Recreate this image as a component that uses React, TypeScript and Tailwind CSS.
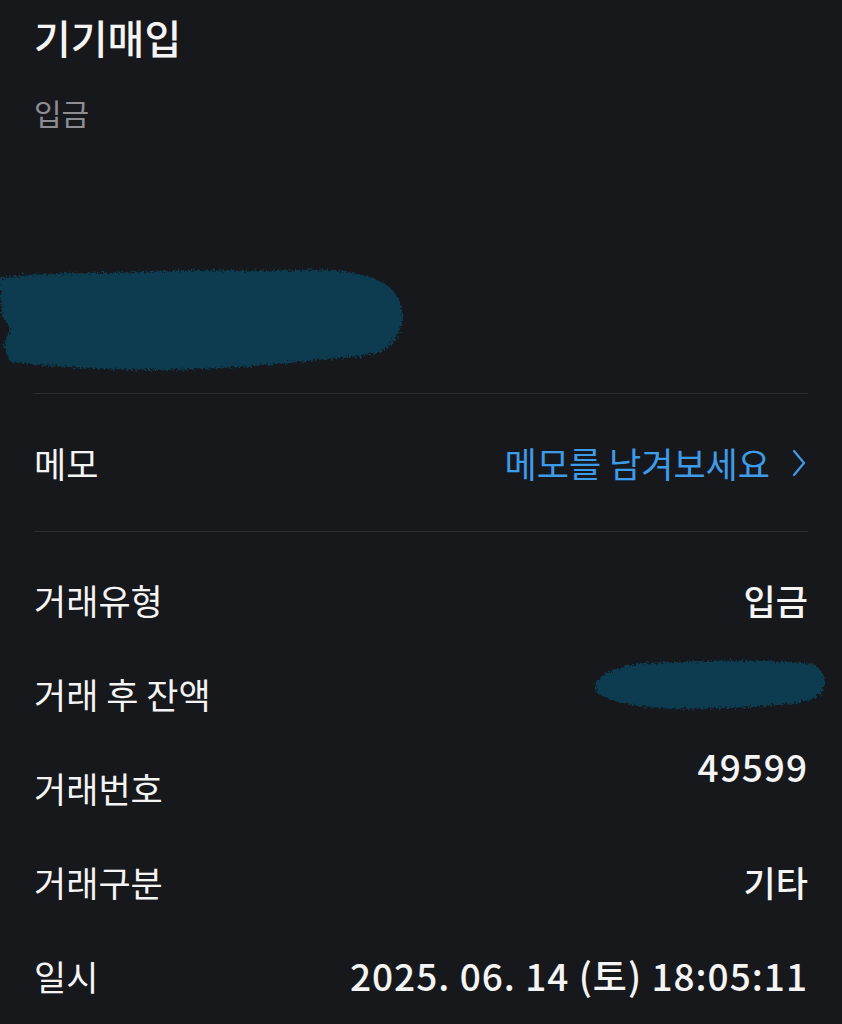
import React from 'react';

const font = { fontFamily: '"Noto Sans CJK KR", "Noto Sans", sans-serif' };

// 가려진 영역 (브러시로 칠한 모양)
const BrushBlob = ({ width, height, d, id }: { width: number; height: number; d: string; id: string }) => (
  <svg width={width} height={height} viewBox={`0 0 ${width} ${height}`} className="block">
    <defs>
      <filter id={id} x="-5%" y="-10%" width="110%" height="120%">
        <feTurbulence type="fractalNoise" baseFrequency="0.45" numOctaves="3" result="n" />
        <feDisplacementMap in="SourceGraphic" in2="n" scale="8" />
      </filter>
    </defs>
    <path d={d} fill="#0b3a4f" filter={`url(#${id})`} />
  </svg>
);

const rows = [
  { label: '거래유형', value: '입금' },
  { label: '거래 후 잔액', value: null },
  { label: '거래번호', value: '49599', num: true, raised: true },
  { label: '거래구분', value: '기타' },
  { label: '일시', value: '2025. 06. 14 (토) 18:05:11', num: true },
];

export default function App() {
  return (
    <div className="min-h-screen w-full bg-[#17181c] text-[#f4f4f5] overflow-hidden" style={font}>
      <div className="px-[34px] pt-[13px]">
        <h1 className="text-[40px] leading-[48px] font-medium">기기매입</h1>
        <p className="mt-[33px] text-[30px] leading-[36px] text-[#8d8d92]">입금</p>
      </div>

      <div className="h-[263px] pt-[136px]">
        <BrushBlob
          id="blob1"
          width={410}
          height={110}
          d="M0 12 C40 6 90 8 140 6 C200 3 260 6 300 4 C340 3 370 8 385 18 C398 26 404 40 402 56 C400 70 392 80 380 86 C360 92 330 92 300 96 C250 101 200 104 150 104 C100 104 50 100 10 96 L4 80 L10 62 L2 50 Z"
        />
      </div>

      <div className="px-[34px]">
        <div className="h-px bg-[#2d2e33]" />
        <div className="h-[137px] flex items-center justify-between">
          <span className="text-[35px] leading-none">메모</span>
          <span className="flex items-center gap-[22px] text-[35px] leading-none text-[#3d9be9]">
            메모를 남겨보세요
            <svg width="14" height="28" viewBox="0 0 14 28" fill="none" className="mr-[2px]">
              <path d="M2 2 L12 14 L2 26" stroke="#3d9be9" strokeWidth="2.2" strokeLinecap="round" strokeLinejoin="round" />
            </svg>
          </span>
        </div>
        <div className="h-px bg-[#2d2e33]" />

        <div className="pt-[20px]">
          {rows.map((r) => (
            <div key={r.label} className="h-[94px] flex items-center justify-between">
              <span className="text-[35px] leading-none">{r.label}</span>
              {r.value === null ? (
                <div className="-mr-[20px] mb-[18px]">
                  <BrushBlob
                    id="blob2"
                    width={240}
                    height={64}
                    d="M8 30 C20 14 50 10 90 10 C140 8 190 8 225 12 C234 16 238 26 236 36 C232 46 220 50 200 52 C160 56 110 58 70 56 C40 54 18 48 8 40 Z"
                  />
                </div>
              ) : (
                <span
                  className={`leading-none font-medium ${r.num ? 'text-[37px] tracking-[1px]' : 'text-[35px]'} ${
                    r.raised ? 'self-start mt-[8px]' : ''
                  }`}
                >
                  {r.value}
                </span>
              )}
            </div>
          ))}
        </div>
      </div>
    </div>
  );
}
